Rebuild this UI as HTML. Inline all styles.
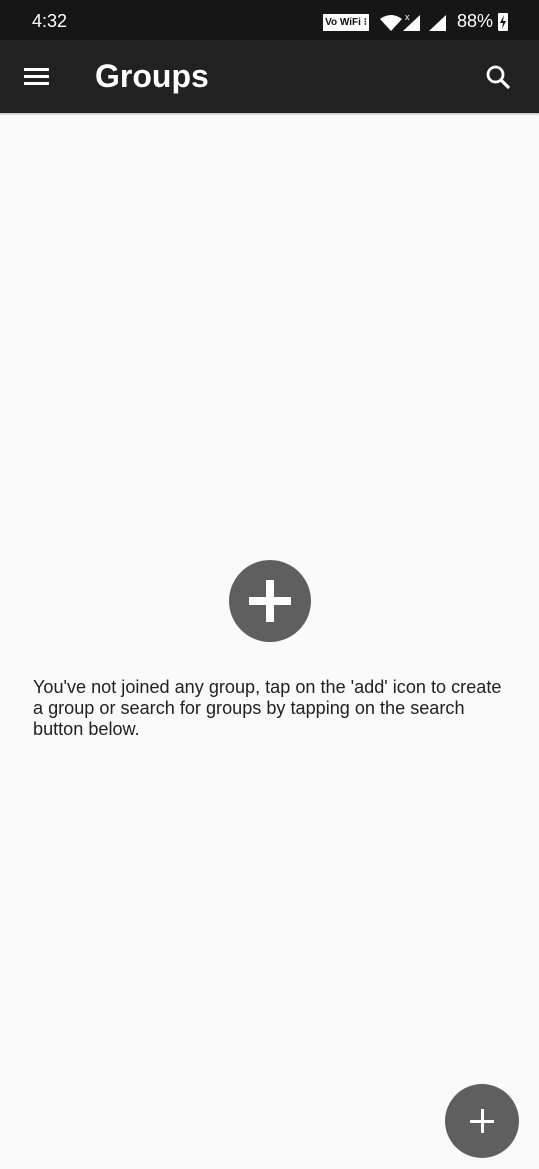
<!DOCTYPE html>
<html><head><meta charset="utf-8"><style>
*{margin:0;padding:0;box-sizing:border-box}
body{width:539px;height:1169px;background:#fafafa;font-family:"Liberation Sans",sans-serif;position:relative;overflow:hidden}
.sb{position:absolute;left:0;top:0;width:539px;height:40px;background:#161616;color:#fff}
.ab{position:absolute;left:0;top:40px;width:539px;height:73px;background:#212121;box-shadow:0 1px 2px rgba(0,0,0,.3)}
.title{position:absolute;left:95px;top:18px;font-size:32px;font-weight:bold;color:#fff;letter-spacing:0}
.msg{position:absolute;left:33px;top:677px;width:506px;font-size:18.1px;line-height:21px;color:#222;white-space:nowrap}
</style></head><body>
<div class="sb">
 <div style="position:absolute;left:32px;top:11px;font-size:18px">4:32</div>
 <div style="position:absolute;left:323px;top:14px;width:46px;height:17px;background:#fff;color:#111;font-size:10px;font-weight:bold;line-height:17px;text-align:center">Vo WiFi ⁝</div>
 <svg style="position:absolute;left:378px;top:12px" width="100" height="22" viewBox="0 0 100 22">
  <path d="M2 7 Q13 -1 24 7 L13 19 Z" fill="#fff"/>
  <text x="27" y="8" fill="#fff" font-size="9" font-family="Liberation Sans">x</text>
  <path d="M25 19 L42 3 L42 19 Z" fill="#fff"/>
  <path d="M51 19 L68 3 L68 19 Z" fill="#fff"/>
 </svg>
 <div style="position:absolute;left:457px;top:11px;font-size:18px">88%</div>
 <div style="position:absolute;left:498px;top:13px;width:10px;height:18px;background:#fff;border-radius:1px"></div>
 <svg style="position:absolute;left:498px;top:13px" width="10" height="18"><path d="M6 2 L2 10 H5 L4 16 L8 8 H5 Z" fill="#161616"/></svg>
</div>
<div class="ab">
 <svg style="position:absolute;left:24px;top:27px" width="25" height="20"><rect y="1" width="25" height="3" fill="#fff"/><rect y="8" width="25" height="3" fill="#fff"/><rect y="15" width="25" height="3" fill="#fff"/></svg>
 <div class="title">Groups</div>
 <svg style="position:absolute;left:485px;top:24px" width="28" height="28" viewBox="0 0 28 28"><circle cx="10.5" cy="10.5" r="7.5" fill="none" stroke="#fff" stroke-width="2.8"/><path d="M16 16 L24 24" stroke="#fff" stroke-width="3.2"/></svg>
</div>
<svg style="position:absolute;left:228px;top:560px" width="84" height="84"><circle cx="42" cy="41" r="41" fill="#5f5f5f"/><rect x="21" y="37" width="42" height="8" fill="#fff"/><rect x="38" y="20" width="8" height="42" fill="#fff"/></svg>
<div class="msg">You've not joined any group, tap on the 'add' icon to create<br>a group or search for groups by tapping on the search<br>button below.</div>
<svg style="position:absolute;left:443px;top:1082px" width="80" height="80"><circle cx="39" cy="39" r="37" fill="#5f5f5f"/><rect x="27" y="38" width="24" height="3" fill="#fff"/><rect x="38" y="27" width="3" height="24" fill="#fff"/></svg>
</body></html>
